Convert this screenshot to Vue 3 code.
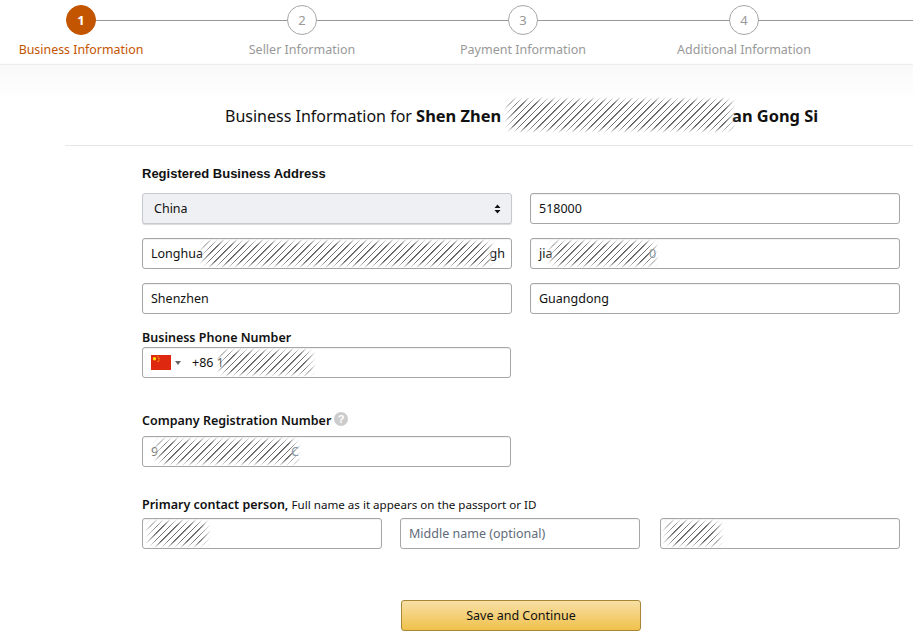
<template>
  <div class="page">
    <header class="stepper">
      <div v-for="(step, index) in steps" :key="step" class="step" :class="{ active: index === 0 }">
        <div class="circle">{{ index + 1 }}</div>
        <div class="step-label">{{ step }}</div>
      </div>
    </header>
    <div class="fade"></div>

    <h1 class="title">
      Business Information for
      <b>Shen Zhen<span class="title-gap"><i class="hatch title-hatch"></i></span>an Gong Si</b>
    </h1>

    <form class="form" @submit.prevent>
      <div class="label address-label">Registered Business Address</div>
      <div class="two-col">
        <div class="select-box">
          <span>China</span>
          <svg width="7" height="10" viewBox="0 0 7 10"><path d="M3.5 0.5 6.5 4H.5zM3.5 9.5.5 6h6z" fill="#111" /></svg>
        </div>
        <div class="field">518000</div>
        <div class="field spread">
          <span>Longhua</span><span>gh</span>
          <i class="hatch" style="left: 56px; width: 296px"></i>
        </div>
        <div class="field">
          <span>jia</span>
          <i class="hatch" style="left: 16px; width: 112px"></i>
          <span class="tail" style="left: 118px">0</span>
        </div>
        <div class="field">Shenzhen</div>
        <div class="field">Guangdong</div>
      </div>

      <div class="label phone-label">Business Phone Number</div>
      <div class="field wide phone">
        <svg class="flag" width="20" height="15" viewBox="0 0 20 15">
          <rect width="20" height="15" fill="#de2910" />
          <circle cx="3.5" cy="3.8" r="1.7" fill="#ffde00" />
          <circle cx="7" cy="1.8" r=".6" fill="#ffde00" />
          <circle cx="8" cy="3.3" r=".6" fill="#ffde00" />
          <circle cx="8" cy="5" r=".6" fill="#ffde00" />
          <circle cx="7" cy="6.5" r=".6" fill="#ffde00" />
        </svg>
        <span class="caret"></span>
        <span class="dial">+86 1</span>
        <i class="hatch" style="left: 73px; width: 100px"></i>
      </div>

      <div class="label company-label">
        Company Registration Number
        <svg class="help" width="14" height="14" viewBox="0 0 14 14">
          <circle cx="7" cy="7" r="7" fill="#ccc" />
          <text x="7" y="11" text-anchor="middle" font-size="11" font-weight="700" fill="#fff">?</text>
        </svg>
      </div>
      <div class="field wide muted">
        <span>9</span>
        <i class="hatch" style="left: 10px; width: 148px"></i>
        <span class="tail" style="left: 148px">C</span>
      </div>

      <div class="label contact-label">
        Primary contact person, <span class="hint">Full name as it appears on the passport or ID</span>
      </div>
      <div class="three-col">
        <div class="field"><i class="hatch" style="left: 2px; width: 66px"></i></div>
        <div class="field placeholder">Middle name (optional)</div>
        <div class="field last"><i class="hatch" style="left: 1px; width: 62px"></i></div>
      </div>

      <button class="save" type="submit">Save and Continue</button>
    </form>
  </div>
</template>

<script setup>
const steps = ['Business Information', 'Seller Information', 'Payment Information', 'Additional Information']
</script>

<style>
html,
body {
  margin: 0;
  overflow: hidden;
  background: #fff;
}
</style>

<style scoped>
.page {
  width: 913px;
  height: 644px;
  overflow: hidden;
  font-family: "Noto Sans", "Open Sans", sans-serif;
  color: #111;
  font-size: 12.5px;
}

.stepper {
  display: grid;
  grid-template-columns: repeat(4, 221px);
  height: 65px;
  padding: 5px 0 0 0;
  margin-left: -29.5px;
  box-sizing: border-box;
  width: 943px;
}

.step {
  position: relative;
  display: flex;
  flex-direction: column;
  align-items: center;
}

.step::after {
  content: "";
  position: absolute;
  left: 50%;
  top: 15px;
  width: 221px;
  height: 1px;
  background: #999;
}

.circle {
  position: relative;
  z-index: 1;
  width: 30px;
  height: 30px;
  box-sizing: border-box;
  border: 1px solid #a6a6a6;
  border-radius: 50%;
  background: #fff;
  color: #999;
  font-size: 13px;
  line-height: 28px;
  text-align: center;
}

.step-label {
  margin-top: 6px;
  color: #999;
  font-size: 12.5px;
  line-height: 18px;
  white-space: nowrap;
}

.active .circle {
  background: #c45500;
  border-color: #c45500;
  color: #fff;
  font-weight: 700;
}

.active .step-label {
  color: #c45500;
  font-size: 12.4px;
}

.fade {
  height: 36px;
  margin-bottom: -36px;
  background: linear-gradient(#f9f9f9, #fff);
  box-shadow: 0 -1px 1px #eee;
}

.title {
  margin: 0 0 0 65px;
  height: 81px;
  box-sizing: border-box;
  padding: 40px 0 0 160px;
  border-bottom: 1px solid #e7e7e7;
  position: relative;
  font-size: 16px;
  font-weight: 400;
  line-height: 22px;
  white-space: nowrap;
}

.title b {
  font-weight: 700;
  font-size: 16.4px;
}

.title-gap {
  position: relative;
  display: inline-block;
  width: 231px;
  height: 1px;
}

.form {
  padding: 19px 0 0 142px;
  width: 758px;
}

.label {
  font-weight: 600;
  font-size: 12.5px;
  line-height: 18px;
}

.address-label {
  font-family: "Liberation Sans", Arial, sans-serif;
  font-weight: 700;
  font-size: 13px;
  margin-bottom: 10px;
}

.two-col {
  display: grid;
  grid-template-columns: 370px 370px;
  gap: 14px 18px;
}

.field {
  position: relative;
  display: flex;
  align-items: center;
  height: 31px;
  box-sizing: border-box;
  padding: 0 8px;
  border: 1px solid #a6a6a6;
  border-radius: 3px;
  background: #fff;
  font-size: 12.5px;
  box-shadow: inset 0 1px 1px rgba(0, 0, 0, 0.06);
}

.spread {
  justify-content: space-between;
  padding-right: 6px;
}

.select-box {
  display: flex;
  align-items: center;
  justify-content: space-between;
  height: 31px;
  box-sizing: border-box;
  padding: 0 10px 0 11px;
  border: 1px solid #c5c8ce;
  border-radius: 3px;
  background: #eff0f3;
  box-shadow: 0 1px 1px rgba(0, 0, 0, 0.15);
  font-size: 12.5px;
}

.tail {
  position: absolute;
  color: #8a97a5;
}

.wide {
  width: 369px;
}

.muted {
  color: #777;
}

.placeholder {
  color: #5f6b7a;
}

.phone-label {
  margin-top: 15px;
}

.flag {
  flex: none;
}

.caret {
  margin-left: 4px;
  width: 0;
  height: 0;
  border-left: 3px solid transparent;
  border-right: 3px solid transparent;
  border-top: 4px solid #666;
}

.dial {
  margin-left: 11px;
}

.company-label {
  display: flex;
  align-items: center;
  gap: 3px;
  margin-top: 34px;
  margin-bottom: 6px;
}

.help {
  margin-top: -4px;
}

.help text {
  font-family: "Liberation Sans", sans-serif;
}

.contact-label {
  margin-top: 29px;
  margin-bottom: 4px;
}

.hint {
  font-weight: 400;
  font-size: 11.6px;
}

.three-col {
  display: grid;
  grid-template-columns: 240px 240px 242px;
  column-gap: 18px;
}

.last {
  margin-left: 2px;
}

.hatch {
  position: absolute;
  top: 0;
  height: 100%;
  background: repeating-linear-gradient(135deg, #fff 0, #fff 3.7px, #555 3.7px, #888 4.6px);
  -webkit-mask-image: linear-gradient(90deg, transparent, #000 12px, #000 calc(100% - 12px), transparent), linear-gradient(transparent, #000 7px, #000 calc(100% - 7px), transparent);
  mask-image: linear-gradient(90deg, transparent, #000 12px, #000 calc(100% - 12px), transparent), linear-gradient(transparent, #000 7px, #000 calc(100% - 7px), transparent);
  -webkit-mask-composite: source-in;
  mask-composite: intersect;
}

.title-hatch {
  left: 3px;
  top: -24px;
  width: 232px;
  height: 36px;
}

.save {
  display: block;
  width: 240px;
  height: 31px;
  margin: 51px 0 0 259px;
  border: 1px solid #a88734;
  border-radius: 3px;
  background: linear-gradient(#f7dfa5, #f0c14b);
  color: #111;
  font-family: inherit;
  font-size: 12.5px;
  cursor: pointer;
}
</style>
